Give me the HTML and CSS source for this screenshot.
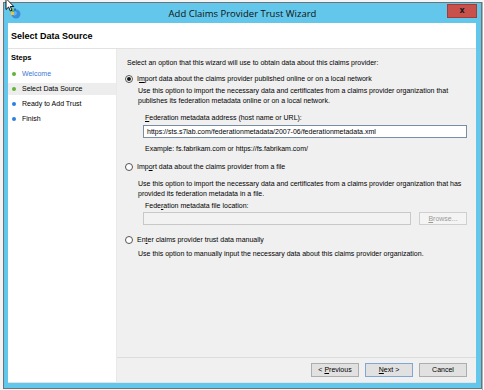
FILE: index.html
```html
<!DOCTYPE html>
<html>
<head>
<meta charset="utf-8">
<link rel="stylesheet" href="styles.css">
</head>
<body>
<div class="screen">
  <div class="window">
    <div class="titlebar">
      <svg class="app-icon" width="11" height="11" viewBox="0 0 11 11">
        <circle cx="6" cy="6" r="4.5" fill="#3b8fd9"/>
        <path d="M3 4 L6 3 L7 6 L4 8 Z" fill="#5db5f0"/>
        <rect x="0.5" y="0.5" width="3" height="3" fill="#7cc242"/>
        <rect x="1" y="4" width="3" height="3" fill="#f2c230"/>
        <rect x="4" y="0.5" width="2" height="2" fill="#2c6fb8"/>
      </svg>
      <div class="title">Add Claims Provider Trust Wizard</div>
      <div class="close">x</div>
    </div>
    <div class="client">
      <div class="header">Select Data Source</div>
      <div class="main">
        <div class="steps">
          <div class="steps-title">Steps</div>
          <ul class="step-list">
            <li class="step link"><span class="dot green"></span>Welcome</li>
            <li class="step current"><span class="dot green"></span>Select Data Source</li>
            <li class="step"><span class="dot blue"></span>Ready to Add Trust</li>
            <li class="step"><span class="dot blue"></span>Finish</li>
          </ul>
        </div>
        <div class="content">
          <div class="page">
            <div class="intro">Select an option that this wizard will use to obtain data about this claims provider:</div>

            <div class="radio-row r1"><span class="radio checked"></span><span>I<u>m</u>port data about the claims provider published online or on a local network</span></div>
            <div class="desc d1">Use this option to import the necessary data and certificates from a claims provider organization that<br>publishes its federation metadata online or on a local network.</div>
            <div class="label l1"><u>F</u>ederation metadata address (host name or URL):</div>
            <div class="input i1">https://sts.s7lab.com/federationmetadata/2007-06/federationmetadata.xml</div>
            <div class="label example">Example: fs.fabrikam.com or https://fs.fabrikam.com/</div>

            <div class="radio-row r2"><span class="radio"></span><span>Imp<u>o</u>rt data about the claims provider from a file</span></div>
            <div class="desc d2">Use this option to import the necessary data and certificates from a claims provider organization that has<br>provided its federation metadata in a file.</div>
            <div class="label l2">Fede<u>r</u>ation metadata file location:</div>
            <div class="file-row">
              <div class="input disabled"></div>
              <div class="btn browse"><u>B</u>rowse...</div>
            </div>

            <div class="radio-row r3"><span class="radio"></span><span>En<u>t</u>er claims provider trust data manually</span></div>
            <div class="desc d3">Use this option to manually input the necessary data about this claims provider organization.</div>
          </div>
          <div class="buttons">
            <div class="btn">&lt; <u>P</u>revious</div>
            <div class="btn default"><u>N</u>ext &gt;</div>
            <div class="btn">Cancel</div>
          </div>
        </div>
      </div>
    </div>
  </div>
  <div class="side"></div>
  <svg class="cursor" width="10" height="15" viewBox="0 0 10 15">
    <path d="M1 0.5 L1 11.5 L3.6 9 L5.4 13 L7 12.3 L5.3 8.5 L8.8 8.5 Z" fill="#fff" stroke="#000" stroke-width="0.9" stroke-linejoin="round"/>
  </svg>
</div>
</body>
</html>
```

FILE: styles.css
```css
html, body {
  margin: 0;
  padding: 0;
}

body {
  font-family: "Liberation Sans", Arial, sans-serif;
  background: #f2f2f2;
}

.screen {
  position: relative;
  width: 484px;
  height: 390px;
  overflow: hidden;
  display: flex;
  padding: 2px 0 0 3px;
  box-sizing: border-box;
  background: #f4f4f4;
}

.window {
  width: 479px;
  height: 387px;
  flex: none;
  box-sizing: border-box;
  border: 1px solid #6c7478;
  background: #62c7ea;
  display: flex;
  flex-direction: column;
}

.side {
  flex: 1;
  background: #ffffff;
  border-left: 1px solid #b0b0b0;
}

.cursor {
  position: absolute;
  left: 5px;
  top: -2px;
}

/* Title bar */
.titlebar {
  height: 20px;
  flex: none;
  display: grid;
  grid-template-columns: 40px 1fr 40px;
  align-items: center;
}

.app-icon {
  margin-left: 6px;
}

.title {
  text-align: center;
  font-family: "Open Sans", "Liberation Sans", sans-serif;
  font-size: 9.5px;
  color: #111;
  padding-top: 1px;
}

.close {
  justify-self: end;
  align-self: start;
  margin-top: 1px;
  margin-right: 4px;
  width: 30px;
  height: 14px;
  box-sizing: border-box;
  background: #c8514b;
  border: 1px solid #a33c37;
  color: #1a1a1a;
  font-family: "DejaVu Sans", sans-serif;
  font-weight: bold;
  font-size: 8px;
  line-height: 11px;
  text-align: center;
}

/* Client */
.client {
  flex: 1;
  margin: 0 5px 5px 4px;
  background: #ffffff;
  display: flex;
  flex-direction: column;
  border-bottom: 1px solid #e4e4e4;
}

.header {
  height: 25px;
  flex: none;
  line-height: 26px;
  padding-left: 3px;
  font-weight: bold;
  font-size: 9px;
  color: #000;
  border-bottom: 1px solid #e2e2e2;
}

.main {
  flex: 1;
  display: flex;
}

/* Steps pane */
.steps {
  width: 108px;
  flex: none;
  background: #fff;
  font-size: 7px;
}

.steps-title {
  font-weight: bold;
  font-size: 7.5px;
  line-height: 12px;
  padding: 3px 0 0 3px;
  color: #000;
}

.step-list {
  list-style: none;
  margin: 4px 0 0;
  padding: 0;
}

.step {
  height: 12px;
  line-height: 12px;
  margin-bottom: 3px;
  padding-left: 3px;
  display: flex;
  align-items: center;
  color: #000;
}

.step.link {
  color: #3a78d8;
}

.step.current {
  background: #ededed;
}

.dot {
  width: 4px;
  height: 4px;
  border-radius: 50%;
  margin: 0 6px 0 1px;
}

.dot.green {
  background: #63b33a;
}

.dot.blue {
  background: #2e7fde;
}

/* Content pane */
.content {
  flex: 1;
  background: #f0f0f0;
  border-left: 1px solid #e9e9e9;
  display: flex;
  flex-direction: column;
}

.page {
  flex: 1;
  padding: 9px 0 0 8px;
  font-size: 7px;
  line-height: 10px;
  color: #000;
  white-space: nowrap;
}

.intro {
  padding-left: 2px;
}

.radio-row {
  display: flex;
  align-items: center;
  gap: 4px;
  height: 10px;
}

.radio {
  width: 8px;
  height: 8px;
  box-sizing: border-box;
  border: 1px solid #555;
  border-radius: 50%;
  background: #fff;
  display: flex;
  align-items: center;
  justify-content: center;
}

.radio.checked::after {
  content: "";
  width: 4px;
  height: 4px;
  border-radius: 50%;
  background: #1a1a1a;
}

.desc {
  padding-left: 13px;
}

.label {
  padding-left: 20px;
}

.input {
  margin-left: 18px;
  width: 324px;
  height: 13px;
  box-sizing: border-box;
  border: 1px solid #7a8ea3;
  background: #fff;
  padding-left: 3px;
  line-height: 11px;
}

.r1 { margin-top: 6px; }
.d1 { margin-top: 2px; }
.l1 { margin-top: 7px; }
.i1 { margin-top: 2px; }
.example { margin-top: 6px; }
.r2 { margin-top: 8px; }
.d2 { margin-top: 7px; }
.l2 { margin-top: 2px; }
.file-row { margin-top: 1px; }
.r3 { margin-top: 10px; }
.d3 { margin-top: 4px; }

.file-row {
  display: flex;
  gap: 8px;
}

.input.disabled {
  width: 268px;
  background: #f2f2f2;
  border-color: #c8c8c8;
}

.btn {
  width: 48px;
  height: 14px;
  box-sizing: border-box;
  border: 1px solid #adadad;
  background: #e1e1e1;
  font-size: 7px;
  line-height: 12px;
  text-align: center;
  color: #000;
}

.btn.browse {
  height: 13px;
  line-height: 11px;
  background: #f4f4f4;
  border-color: #cfcfcf;
  color: #9a9a9a;
}

.btn.default {
  border-color: #7fa6d6;
}

.buttons {
  height: 24px;
  flex: none;
  border-top: 1px solid #dcdcdc;
  display: flex;
  justify-content: flex-end;
  align-items: center;
  gap: 6px;
  padding-right: 9px;
}
```
